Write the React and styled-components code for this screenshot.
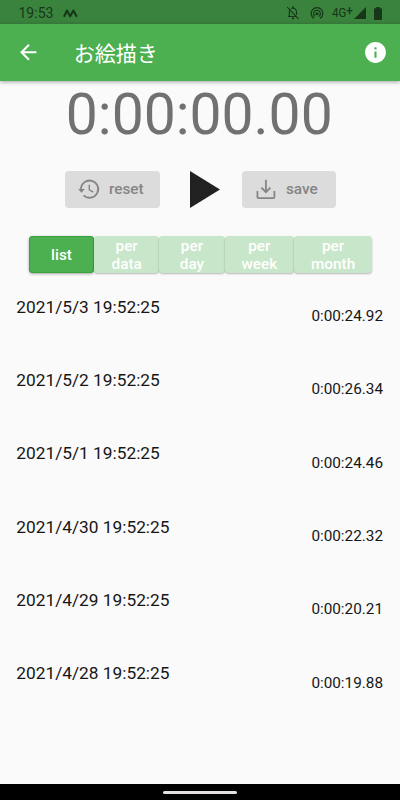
import React from 'react';
import styled, { createGlobalStyle } from 'styled-components';

const GlobalStyle = createGlobalStyle`
  * { box-sizing: border-box; }
  body { margin: 0; background: #fafafa; }
  button { font: inherit; border: 0; padding: 0; margin: 0; background: none; color: inherit; }
  svg { display: block; flex: none; }
`;

const Screen = styled.div`
  width: 400px;
  height: 800px;
  display: flex;
  flex-direction: column;
  overflow: hidden;
  background: #fafafa;
  font-family: Roboto, 'Noto Sans CJK JP', sans-serif;
`;

const StatusBar = styled.div`
  flex: none;
  height: 24px;
  display: flex;
  align-items: center;
  padding: 2px 18px 0 18.5px;
  background: #3a833d;
  color: #17361a;
`;

const Clock = styled.span`
  width: 44.5px;
  font-size: 14px;
  line-height: 20px;
`;

const StatusIcons = styled.div`
  margin-left: auto;
  display: flex;
  align-items: center;
`;

const Network = styled.span`
  display: flex;
  width: 22px;
  justify-content: flex-end;
  margin: 0 1.5px 0 6.5px;
  padding-bottom: 1px;
  font-size: 12.5px;
  line-height: 15px;
  transform: scaleX(0.92);
  transform-origin: right;
`;

const Plus = styled.span`
  font-size: 13px;
  font-weight: 500;
  line-height: 11px;
`;

const AppBar = styled.header`
  flex: none;
  height: 57.4px;
  display: flex;
  align-items: center;
  padding: 0 12px 0 16px;
  background: #4caf50;
  color: #fff;
  box-shadow: 0 1px 4px rgba(0, 0, 0, 0.35);
`;

const IconButton = styled.button`
  display: flex;
`;

const Title = styled.h1`
  flex: 1;
  margin: 0 0 0 33.3px;
  padding-top: 3px;
  font-size: 21px;
  font-weight: 400;
  line-height: 30px;
`;

const Timer = styled.div`
  flex: none;
  height: 67px;
  margin-left: -1.5px;
  font-size: 57px;
  line-height: 67px;
  text-align: center;
  color: #717171;
`;

const Controls = styled.div`
  flex: none;
  height: 37px;
  margin-top: 22.6px;
  padding-left: 64.5px;
  display: flex;
  align-items: center;
`;

const ControlButton = styled.button`
  width: ${(p) => p.$width}px;
  height: 37px;
  display: flex;
  align-items: center;
  padding-left: 12.5px;
  gap: 8px;
  border-radius: 4px;
  background: #dcdcdc;
  color: #858585;
  font-size: 15.3px;
  font-weight: 500;
`;

const PlayButton = styled.button`
  display: flex;
  margin: 0 21.5px 0 30px;
`;

const Tabs = styled.div`
  flex: none;
  height: 37px;
  margin: 28px 0 0 29px;
  display: flex;
`;

const Tab = styled.button`
  width: ${(p) => p.$width}px;
  height: 37px;
  display: flex;
  align-items: center;
  justify-content: center;
  padding: 1px 12px 0;
  border-radius: 4px;
  background: ${(p) => (p.$active ? '#4caf50' : '#c8e6c9')};
  box-shadow: ${(p) =>
    p.$active
      ? 'inset 0 0 0 1px #36a33d, 0 1px 3px rgba(0, 0, 0, 0.35)'
      : '0 1px 2px rgba(0, 0, 0, 0.28)'};
  color: #fff;
  font-size: 15.3px;
  font-weight: 500;
  line-height: 18px;
  text-align: center;
`;

const Records = styled.ul`
  flex: 1;
  min-height: 0;
  margin: 0;
  padding: 22.4px 17px 0 16.3px;
  list-style: none;
`;

const Record = styled.li`
  height: 73.33px;
  display: flex;
  justify-content: space-between;
  color: #161616;
`;

const RecordDate = styled.span`
  margin-top: 0.2px;
  font-size: 17.3px;
  line-height: 22px;
`;

const RecordTime = styled.span`
  margin-top: 9.7px;
  font-size: 15.3px;
  line-height: 22px;
`;

const NavigationBar = styled.div`
  flex: none;
  height: 16px;
  display: flex;
  align-items: center;
  justify-content: center;
  padding-top: 1px;
  background: #000;
`;

const GestureHandle = styled.div`
  width: 74px;
  height: 3px;
  border-radius: 2px;
  background: #e4e0e0;
`;

const NotificationMark = () => (
  <svg width="15" height="9" viewBox="0 0 15 9" fill="none" stroke="currentColor" strokeWidth="2.1" strokeLinejoin="round">
    <path d="M1 7.7 4 1.5 7.2 7.2 10.4 1.5 13.8 7.7" />
    <path d="M4 1.5 6 6M10.4 1.5 12.5 6" strokeWidth="1" />
  </svg>
);

const BellOff = () => (
  <svg width="14" height="14" viewBox="0 0 14 14" fill="none" stroke="currentColor" strokeWidth="1.1">
    <path d="M1.2 1.2 12.5 12.8M3.3 10.2V6c0-1.2.4-2.1 1.1-2.8M5.5 2.5C8.6 1.4 10.5 3.4 10.5 6v3M2 10.5h8.5" />
    <path d="M7 .6v1.7M6 12.3h2" strokeWidth="1.7" />
  </svg>
);

const Hotspot = () => (
  <svg width="14" height="14" viewBox="0 0 14 14" fill="none" stroke="currentColor" strokeWidth="1.2">
    <circle cx="7" cy="7.8" r="1.5" fill="currentColor" stroke="none" />
    <path d="M3.9 12.4A5.8 5.8 0 1 1 10.1 12.4M5 10.4a3.4 3.4 0 1 1 4 0" />
  </svg>
);

const Signal = () => (
  <svg width="12" height="12" viewBox="0 0 12 12">
    <path d="M0 12 12 0V12Z" fill="currentColor" />
  </svg>
);

const Battery = () => (
  <svg width="8" height="13" viewBox="0 0 8 13">
    <path d="M0 1.9Q0 1.2.7 1.2H2.3V0H5.7V1.2H7.3Q8 1.2 8 1.9V12.3Q8 13 7.3 13H.7Q0 13 0 12.3Z" fill="currentColor" />
  </svg>
);

const BackArrow = () => (
  <svg width="24.5" height="24.5" viewBox="0 0 24 24" fill="currentColor">
    <path d="M20 11H7.83l5.59-5.59L12 4l-8 8 8 8 1.41-1.41L7.83 13H20v-2z" />
  </svg>
);

const Info = () => (
  <svg width="25" height="25" viewBox="0 0 24 24" fill="currentColor">
    <path d="M12 2C6.48 2 2 6.48 2 12s4.48 10 10 10 10-4.48 10-10S17.52 2 12 2zm1 15h-2v-6h2v6zm0-8h-2V7h2v2z" />
  </svg>
);

const History = () => (
  <svg width="24" height="24" viewBox="0 0 24 24" fill="none" stroke="currentColor" strokeWidth="1.8">
    <path d="M4 13.8V12.2A8.6 8.6 0 1 1 6.6 18.3" />
    <path d="M1.1 12h6.8l-3.4 3.8Z" fill="currentColor" stroke="none" />
    <path d="M12.3 7.8v5.1l4 2.3" strokeWidth="1.4" />
  </svg>
);

const Download = () => (
  <svg width="24" height="24" viewBox="0 0 24 24" fill="none" stroke="currentColor" strokeWidth="1.8">
    <path d="M3.4 14v6.1q0 1 1 1h15q1 0 1-1V14M11.9 2.8v12.2M7.4 10.7l4.5 4.5 4.5-4.5" />
  </svg>
);

const Play = () => (
  <svg width="30" height="37" viewBox="0 0 30 37">
    <path d="M0 0 30 18.5 0 37Z" fill="#212121" />
  </svg>
);

const tabs = [
  { label: 'list', width: 65, active: true },
  { label: 'per data', width: 65.3 },
  { label: 'per day', width: 65.3 },
  { label: 'per week', width: 69.5 },
  { label: 'per month', width: 78 },
];

const records = [
  ['2021/5/3 19:52:25', '0:00:24.92'],
  ['2021/5/2 19:52:25', '0:00:26.34'],
  ['2021/5/1 19:52:25', '0:00:24.46'],
  ['2021/4/30 19:52:25', '0:00:22.32'],
  ['2021/4/29 19:52:25', '0:00:20.21'],
  ['2021/4/28 19:52:25', '0:00:19.88'],
];

const StatusGap = styled.span`
  width: ${(p) => p.$size}px;
`;

export default function App() {
  return (
    <Screen>
      <GlobalStyle />
      <StatusBar>
        <Clock>19:53</Clock>
        <NotificationMark />
        <StatusIcons>
          <BellOff />
          <StatusGap $size={10} />
          <Hotspot />
          <Network>4G<Plus>+</Plus></Network>
          <Signal />
          <StatusGap $size={8} />
          <Battery />
        </StatusIcons>
      </StatusBar>
      <AppBar>
        <IconButton aria-label="back"><BackArrow /></IconButton>
        <Title>お絵描き</Title>
        <IconButton aria-label="info"><Info /></IconButton>
      </AppBar>
      <Timer>0:00:00.00</Timer>
      <Controls>
        <ControlButton $width={95.5}><History />reset</ControlButton>
        <PlayButton aria-label="start"><Play /></PlayButton>
        <ControlButton $width={94}><Download />save</ControlButton>
      </Controls>
      <Tabs>
        {tabs.map((t) => (
          <Tab key={t.label} $width={t.width} $active={t.active}>{t.label}</Tab>
        ))}
      </Tabs>
      <Records>
        {records.map(([date, time]) => (
          <Record key={date}>
            <RecordDate>{date}</RecordDate>
            <RecordTime>{time}</RecordTime>
          </Record>
        ))}
      </Records>
      <NavigationBar><GestureHandle /></NavigationBar>
    </Screen>
  );
}
